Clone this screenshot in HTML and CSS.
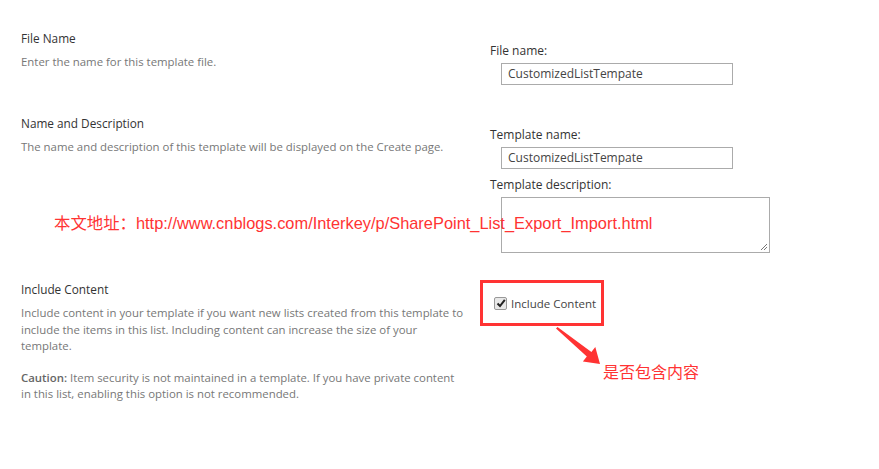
FILE: index.html
```html
<!DOCTYPE html>
<html>
<head>
<meta charset="utf-8">
<link rel="stylesheet" href="styles.css">
</head>
<body>
<div class="page">
  <section class="row row-file">
    <div class="left">
      <h3 class="title">File Name</h3>
      <p class="desc">Enter the name for this template file.</p>
    </div>
    <div class="right">
      <label class="lbl">File name:</label>
      <div class="input">CustomizedListTempate</div>
    </div>
  </section>
  <section class="row row-name">
    <div class="left">
      <h3 class="title">Name and Description</h3>
      <p class="desc">The name and description of this template will be displayed on the Create page.</p>
    </div>
    <div class="right">
      <label class="lbl">Template name:</label>
      <div class="input">CustomizedListTempate</div>
      <label class="lbl lbl-desc">Template description:</label>
      <div class="textarea">
        <svg class="grip" width="9" height="9" viewBox="0 0 9 9"><path d="M8 2 L2 8 M8 5 L5 8" stroke="#777" stroke-width="1"/></svg>
      </div>
    </div>
  </section>
  <section class="row row-content">
    <div class="left">
      <h3 class="title">Include Content</h3>
      <p class="desc">Include content in your template if you want new lists created from this template to include the items in this list. Including content can increase the size of your template.</p>
      <p class="desc caution"><span class="strong">Caution:</span> Item security is not maintained in a template. If you have private content in this list, enabling this option is not recommended.</p>
    </div>
    <div class="right">
      <div class="redbox">
        <span class="check"><svg width="10" height="10" viewBox="0 0 10 10"><path d="M1.5 5.5 L4 8 L8.8 1.8" fill="none" stroke="#222" stroke-width="2"/></svg></span>
        <span class="chklbl">Include Content</span>
      </div>
    </div>
  </section>
  <div class="note-url">本文地址：http://www.cnblogs.com/Interkey/p/SharePoint_List_Export_Import.html</div>
  <svg class="arrow" width="60" height="50" viewBox="0 0 60 50"><polygon points="0,1.5 30.8,29.5 26.9,34.4 44,37 39.3,20 35.4,24.9 1.5,0" fill="#f33"/></svg>
  <div class="note-cn">是否包含内容</div>
</div>
</body>
</html>
```

FILE: styles.css
```css
html, body { margin: 0; padding: 0; background: #fff; }
body { font-family: "Open Sans", "Noto Sans", sans-serif; }
.page { position: relative; width: 879px; height: 469px; }
.row { display: flex; }
.left { width: 445px; padding-left: 21px; flex: none; }
.right { padding-left: 24px; flex: 1; }
.title { margin: 0; font-weight: normal; font-size: 11.8px; color: #333; line-height: 16px; }
.desc { margin: 8px 0 0; font-size: 11.4px; color: #777; line-height: 16.5px; }
.strong { font-weight: 600; color: #666; }
.caution { margin-top: 15px; }
.lbl { display: block; font-size: 12px; color: #333; line-height: 16px; }
.input { margin: 4px 0 0 11px; width: 224px; height: 20px; border: 1px solid #ababab; font-size: 12px; color: #444; line-height: 20px; padding-left: 6px; }
.textarea { position: relative; margin: 4px 0 0 11px; width: 267px; height: 54px; border: 1px solid #ababab; }
.grip { position: absolute; right: 1px; bottom: 1px; }
.lbl-desc { margin-top: 8px; }
.row-file { padding-top: 30px; }
.row-file .right { padding-top: 13px; }
.row-name { padding-top: 30px; }
.row-name .right { padding-top: 12px; }
.row-content { padding-top: 28px; }
.row-content .right { padding-left: 14px; margin-top: -1px; }
.redbox { width: 118px; height: 40px; border: 3px solid #f33; display: flex; align-items: center; }
.check { margin-left: 11px; width: 11px; height: 11px; border: 1px solid #999; border-radius: 2px; background: #e8e8e8; display: flex; align-items: center; justify-content: center; }
.chklbl { margin-left: 4px; font-size: 11.5px; color: #444; }
.note-url { position: absolute; left: 54px; top: 210px; font-family: "Liberation Sans", "Noto Sans CJK SC", sans-serif; font-size: 16.4px; color: #f33; }
.arrow { position: absolute; left: 556px; top: 327px; }
.note-cn { position: absolute; left: 603px; top: 359px; font-family: "Noto Sans CJK SC", sans-serif; font-size: 16px; color: #f33; }
```
